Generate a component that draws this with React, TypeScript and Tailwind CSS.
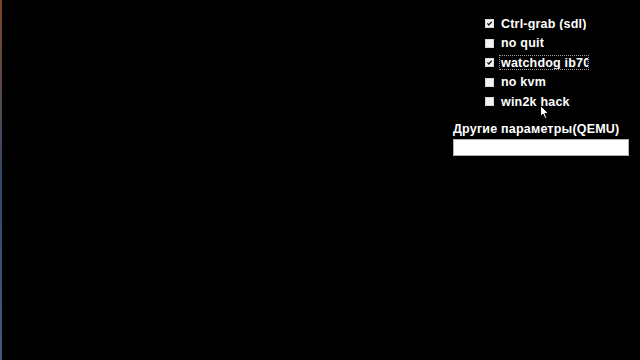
import React from "react";

const Check = () => (
  <svg width="9" height="9" viewBox="0 0 9 9" className="block">
    <path d="M1.8 4.4 L3.6 6.4 L7.3 2.2" stroke="#111" strokeWidth="1.7" fill="none" />
  </svg>
);

function Row({ label, checked, focused }: { label: string; checked?: boolean; focused?: boolean }) {
  return (
    <div className="flex items-center h-[19.5px]">
      <div className="w-[9px] h-[9px] bg-[#f4f4f4] border border-[#d8d8d8] flex items-center justify-center shrink-0">
        {checked ? <Check /> : null}
      </div>
      <div
        className={
          "ml-[5px] pl-[1px] h-[15px] flex items-center overflow-hidden whitespace-nowrap max-w-[90px] " +
          (focused ? "border border-dotted border-[#9a9a9a]" : "border border-transparent")
        }
      >
        <span className="text-white text-[12.5px] font-bold leading-none tracking-[0.2px]">{label}</span>
      </div>
    </div>
  );
}

export default function App() {
  return (
    <div
      className="w-[640px] h-[360px] bg-black flex relative overflow-hidden"
      style={{ fontFamily: '"Liberation Sans", Arial, sans-serif' }}
    >
      <div className="w-[2px] h-full bg-gradient-to-b from-[#7a4420] via-[#34466a] to-[#45577a]" />
      <div className="flex-1" />
      <div className="w-[176px] mr-[11px] flex flex-col pt-[14px]">
        <div className="flex flex-col pl-[32px]">
          <Row label="Ctrl-grab (sdl)" checked />
          <Row label="no quit" />
          <Row label="watchdog ib700" checked focused />
          <Row label="no kvm" />
          <Row label="win2k hack" />
        </div>
        <div className="mt-[11px] text-white text-[12.5px] font-bold leading-none tracking-[0.2px] whitespace-nowrap">
          Другие параметры(QEMU)
        </div>
        <div className="mt-[4px] h-[17px] w-[176px] bg-white border border-[#b0b0b0]" />
      </div>
      <svg
        className="absolute left-[540px] top-[105px]"
        width="10"
        height="15"
        viewBox="0 0 10 15"
      >
        <path d="M0.5 0.5 L0.5 11.5 L3 9 L5 13.5 L6.8 12.7 L4.9 8.4 L8.5 8.4 Z" fill="white" stroke="black" strokeWidth="1" />
      </svg>
    </div>
  );
}
